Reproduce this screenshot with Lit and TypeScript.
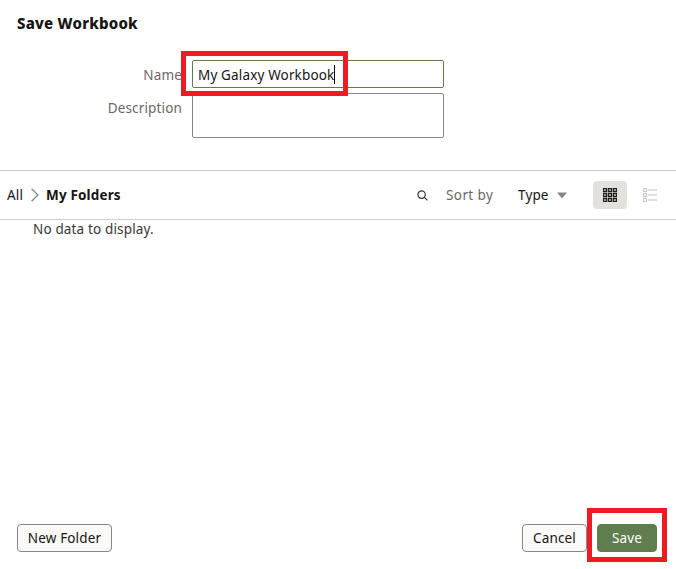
import { LitElement, html, css, svg } from "lit";
import { customElement } from "lit/decorators.js";

const cells = [0, 5, 10];

@customElement("app-root")
export class AppRoot extends LitElement {
  static styles = css`
    :host {
      display: flex;
      flex-direction: column;
      box-sizing: border-box;
      width: 676px;
      height: 569px;
      overflow: hidden;
      background: #fff;
      color: #161513;
      font: 13.5px/20px "Noto Sans", "Open Sans", sans-serif;
      letter-spacing: 0.15px;
      white-space: nowrap;
    }
    * { box-sizing: border-box; }
    svg { display: block; flex: none; }
    h1 {
      margin: 0;
      padding: 13px 17px 0;
      height: 60px;
      font-size: 15px;
      line-height: 20px;
      font-weight: 800;
      letter-spacing: 0.22px;
    }
    .form {
      display: grid;
      grid-template-columns: 182px 252px;
      grid-template-rows: 28px 45px;
      column-gap: 10px;
      row-gap: 5px;
      height: 110px;
    }
    .label { text-align: right; color: #6b6966; padding-top: 5px; }
    .field { border: 1px solid #8b8680; border-radius: 2px; }
    .name {
      position: relative;
      display: flex;
      align-items: center;
      padding: 1px 0 0 5px;
      border-color: #5f7d4f;
    }
    .caret { width: 1px; height: 19px; background: #000; }
    .mark { position: absolute; border: 5px solid #ed1c24; }
    .mark-name { left: -12px; top: -10px; width: 167px; height: 45px; }
    .mark-save { left: -10px; top: -16px; width: 80px; height: 54px; }
    .bar {
      display: flex;
      align-items: center;
      height: 50px;
      padding: 0 9px 0 7px;
      border-top: 1px solid #d0cfcb;
      border-bottom: 1px solid #d0cfcb;
    }
    .chevron { margin: 0 7px 0 8px; }
    .current { font-weight: 700; }
    .tools { display: flex; align-items: center; margin-left: auto; }
    .sort { margin-left: 18px; width: 72px; color: #6b6966; letter-spacing: 0.4px; }
    .type { width: 39px; }
    .view {
      display: flex;
      align-items: center;
      justify-content: center;
      width: 34px;
      height: 28px;
      border-radius: 4px;
    }
    .grid { margin-left: 26px; margin-right: 6px; background: #e3e1dc; }
    .empty { flex: 1; margin-top: -1px; padding-left: 33px; color: #3a3836; }
    .footer { display: flex; height: 45px; padding: 0 19px 0 17px; }
    .btn {
      display: flex;
      align-items: center;
      justify-content: center;
      height: 28px;
      border: 1px solid #8b8680;
      border-radius: 4px;
      background: #fcfaf8;
    }
    .new { width: 95px; }
    .cancel { width: 65px; margin-left: auto; margin-right: 10px; }
    .save-wrap { position: relative; width: 60px; height: 28px; }
    .save { background: #5f7d4f; border-color: #5f7d4f; color: #fff; }
  `;

  render() {
    return html`
      <h1><span>Save Workbook</span></h1>
      <div class="form">
        <div class="label">Name</div>
        <div class="field name">
          <span>My Galaxy Workbook</span><i class="caret"></i>
          <i class="mark mark-name"></i>
        </div>
        <div class="label">Description</div>
        <div class="field"></div>
      </div>
      <div class="bar">
        <span>All</span>
        <svg class="chevron" width="8" height="14" viewBox="0 0 8 14" fill="none" stroke="#85817d" stroke-width="1.2">
          <path d="M.6.7 7 7 .6 13.3" />
        </svg>
        <span class="current">My Folders</span>
        <div class="tools">
          <svg width="11" height="11" viewBox="0 0 11 11" fill="none" stroke="#393735" stroke-width="1.2">
            <circle cx="4.6" cy="4.6" r="3.7" />
            <path d="m7.2 7.2 3.2 3.2" />
          </svg>
          <span class="sort">Sort by</span>
          <span class="type">Type</span>
          <svg width="10" height="7" viewBox="0 0 10 7"><path d="M0 .5h10L5 6.5z" fill="#85858a" /></svg>
          <div class="view grid">
            <svg width="14" height="14" viewBox="0 0 14 14" fill="none" stroke="#201e1c" stroke-width="1.4">
              ${cells.map((y) => cells.map((x) => svg`<rect x=${x + 0.5} y=${y + 0.5} width="3" height="3" />`))}
            </svg>
          </div>
          <div class="view">
            <svg width="14" height="14" viewBox="0 0 14 14" fill="none" stroke="#cbcac7" stroke-width="1.2">
              ${cells.map((y) => svg`<rect x=".5" y=${y + 0.5} width="3" height="3" /><path d=${`M5 ${y + 2}h9`} />`)}
            </svg>
          </div>
        </div>
      </div>
      <div class="empty"><span>No data to display.</span></div>
      <div class="footer">
        <div class="btn new"><span>New Folder</span></div>
        <div class="btn cancel"><span>Cancel</span></div>
        <div class="save-wrap">
          <div class="btn save"><span>Save</span></div>
          <i class="mark mark-save"></i>
        </div>
      </div>
    `;
  }
}
